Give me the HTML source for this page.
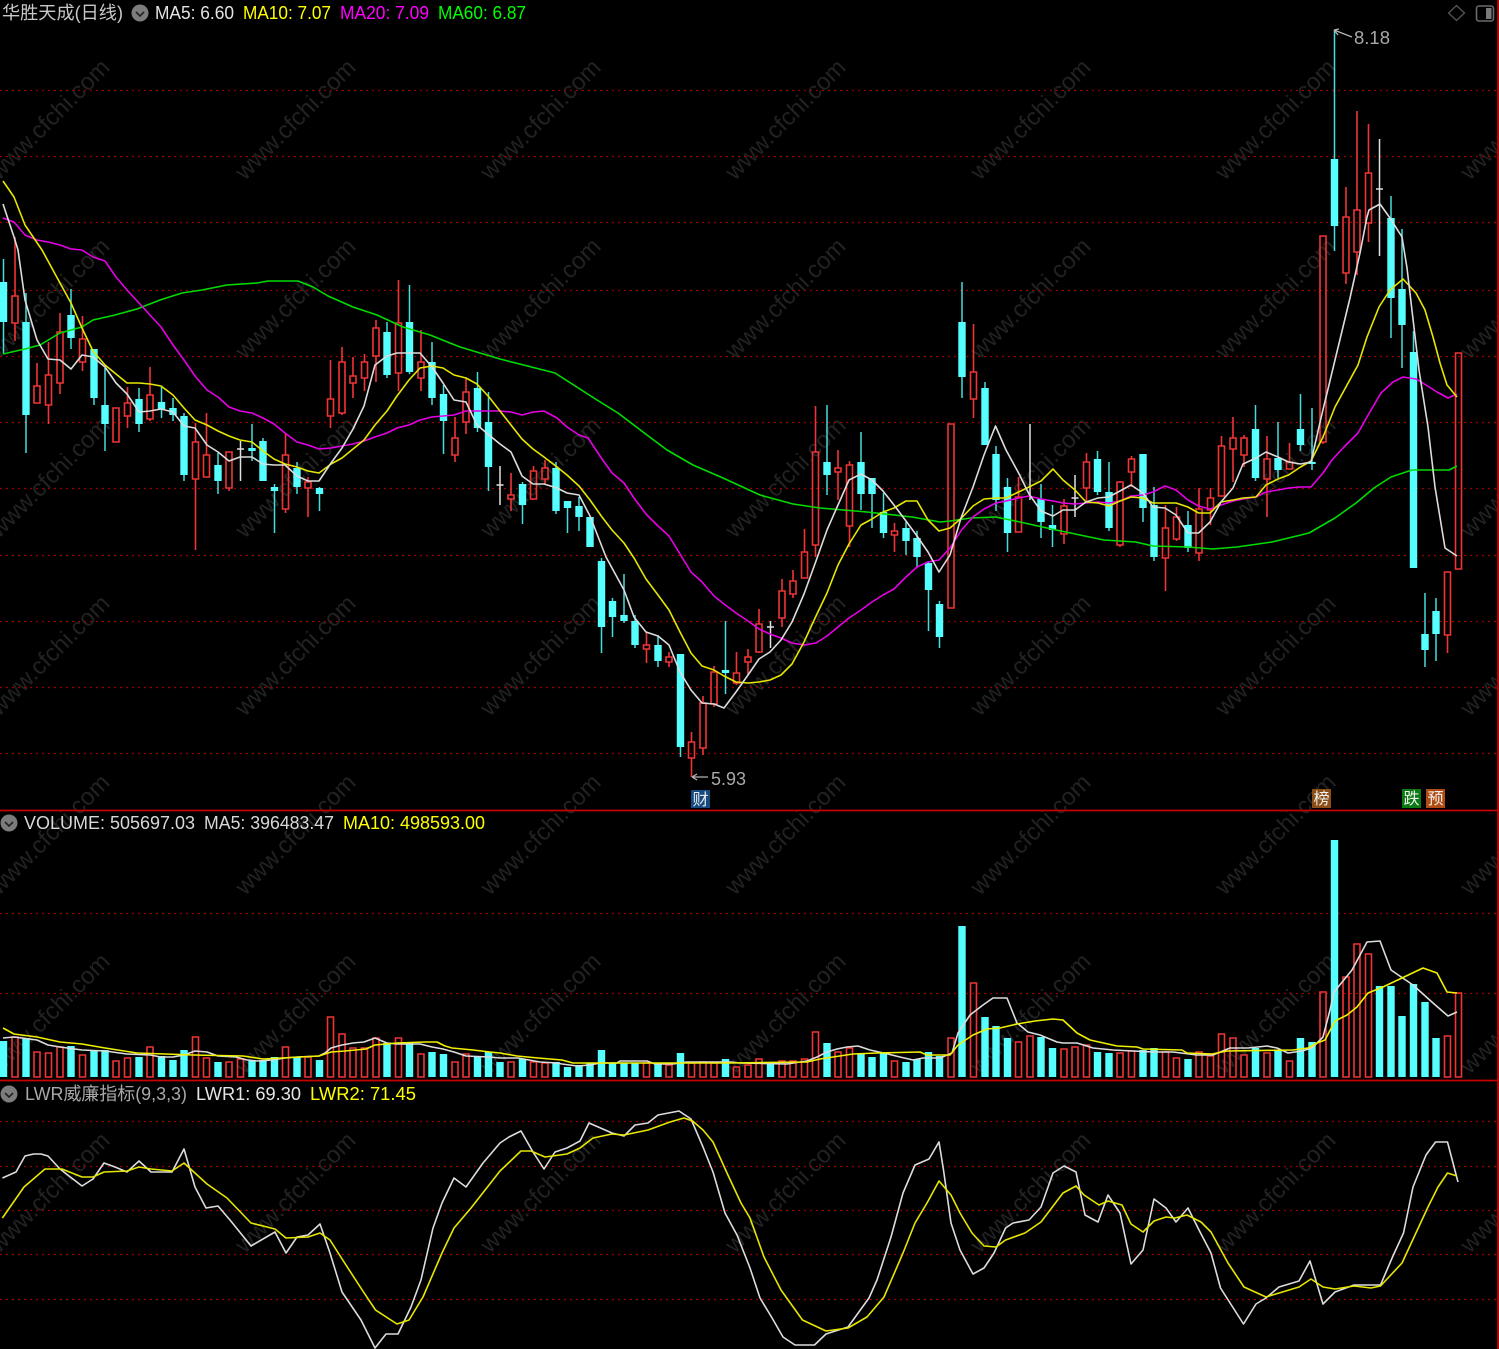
<!DOCTYPE html>
<html lang="zh">
<head>
<meta charset="utf-8">
<title>华胜天成(日线)</title>
<style>
html,body{margin:0;padding:0;background:#000;width:1499px;height:1349px;overflow:hidden}
svg{display:block;position:absolute;left:0;top:0;filter:blur(.3px)}
text{font-family:"Liberation Sans","Noto Sans CJK SC",sans-serif}
.wm text{font-size:24px;fill:#222}
.l{fill:none;stroke-width:1.6;stroke-linejoin:round}
</style>
</head>
<body>
<svg width="1499" height="1349" viewBox="0 0 1499 1349" xmlns="http://www.w3.org/2000/svg">
<rect width="1499" height="1349" fill="#000"/>
<!-- watermarks -->
<g class="wm" text-anchor="middle" transform="translate(5,0)">
<text transform="translate(50,125) rotate(-45)">www.cfchi.com</text><text transform="translate(296,125) rotate(-45)">www.cfchi.com</text><text transform="translate(541,125) rotate(-45)">www.cfchi.com</text><text transform="translate(786,125) rotate(-45)">www.cfchi.com</text><text transform="translate(1031,125) rotate(-45)">www.cfchi.com</text><text transform="translate(1276,125) rotate(-45)">www.cfchi.com</text><text transform="translate(1521,125) rotate(-45)">www.cfchi.com</text>
<text transform="translate(50,304) rotate(-45)">www.cfchi.com</text><text transform="translate(296,304) rotate(-45)">www.cfchi.com</text><text transform="translate(541,304) rotate(-45)">www.cfchi.com</text><text transform="translate(786,304) rotate(-45)">www.cfchi.com</text><text transform="translate(1031,304) rotate(-45)">www.cfchi.com</text><text transform="translate(1276,304) rotate(-45)">www.cfchi.com</text><text transform="translate(1521,304) rotate(-45)">www.cfchi.com</text>
<text transform="translate(50,483) rotate(-45)">www.cfchi.com</text><text transform="translate(296,483) rotate(-45)">www.cfchi.com</text><text transform="translate(541,483) rotate(-45)">www.cfchi.com</text><text transform="translate(786,483) rotate(-45)">www.cfchi.com</text><text transform="translate(1031,483) rotate(-45)">www.cfchi.com</text><text transform="translate(1276,483) rotate(-45)">www.cfchi.com</text><text transform="translate(1521,483) rotate(-45)">www.cfchi.com</text>
<text transform="translate(50,661) rotate(-45)">www.cfchi.com</text><text transform="translate(296,661) rotate(-45)">www.cfchi.com</text><text transform="translate(541,661) rotate(-45)">www.cfchi.com</text><text transform="translate(786,661) rotate(-45)">www.cfchi.com</text><text transform="translate(1031,661) rotate(-45)">www.cfchi.com</text><text transform="translate(1276,661) rotate(-45)">www.cfchi.com</text><text transform="translate(1521,661) rotate(-45)">www.cfchi.com</text>
<text transform="translate(50,840) rotate(-45)">www.cfchi.com</text><text transform="translate(296,840) rotate(-45)">www.cfchi.com</text><text transform="translate(541,840) rotate(-45)">www.cfchi.com</text><text transform="translate(786,840) rotate(-45)">www.cfchi.com</text><text transform="translate(1031,840) rotate(-45)">www.cfchi.com</text><text transform="translate(1276,840) rotate(-45)">www.cfchi.com</text><text transform="translate(1521,840) rotate(-45)">www.cfchi.com</text>
<text transform="translate(50,1019) rotate(-45)">www.cfchi.com</text><text transform="translate(296,1019) rotate(-45)">www.cfchi.com</text><text transform="translate(541,1019) rotate(-45)">www.cfchi.com</text><text transform="translate(786,1019) rotate(-45)">www.cfchi.com</text><text transform="translate(1031,1019) rotate(-45)">www.cfchi.com</text><text transform="translate(1276,1019) rotate(-45)">www.cfchi.com</text><text transform="translate(1521,1019) rotate(-45)">www.cfchi.com</text>
<text transform="translate(50,1198) rotate(-45)">www.cfchi.com</text><text transform="translate(296,1198) rotate(-45)">www.cfchi.com</text><text transform="translate(541,1198) rotate(-45)">www.cfchi.com</text><text transform="translate(786,1198) rotate(-45)">www.cfchi.com</text><text transform="translate(1031,1198) rotate(-45)">www.cfchi.com</text><text transform="translate(1276,1198) rotate(-45)">www.cfchi.com</text><text transform="translate(1521,1198) rotate(-45)">www.cfchi.com</text>
</g>
<!-- grid -->
<path fill="none" stroke="#960000" stroke-width="1.3" stroke-dasharray="2 4" d="M0 90.5H1496M0 156.5H1496M0 222.5H1496M0 290.5H1496M0 356.5H1496M0 422.5H1496M0 488.5H1496M0 555.5H1496M0 621.5H1496M0 687.5H1496M0 753.5H1496M0 913.5H1496M0 993.5H1496M0 1121.5H1496M0 1166.5H1496M0 1210.5H1496M0 1254.5H1496M0 1299.5H1496"/>
<path fill="none" stroke="#c80000" stroke-width="1.8" d="M0 810.5H1498M0 1080.5H1498"/>
<path fill="none" stroke="#c80000" stroke-width="1.8" d="M1498 0V1349"/>

<!-- cyan wicks -->
<path fill="none" stroke="#44dede" stroke-width="1.5" d="M3.5 259V354M26 293V453M71 289V349M94 349V405M105 368V451M139 388V432M161.5 387V418M173 398V421M184 413V481M218 453V494M252 424V461M263 438V481M274.5 484V533M297 462V494M319.5 487V511M387 322V378M409.5 285V374M432 342V405M443.5 385V454M477.5 372V432M488.5 392V491M522.5 482V524M556 462V514M567.5 501V533M579 497V531M590 517V547M601.5 558V653M612.5 598V637M624 574V623M635 615V648M658 635V667M680.5 654V757M725.5 621V694M827 405V495M861 432V510M872 478V528M883.5 493V538M906 522V555M917 531V568M928.5 561V631M939.5 601V648M962 282V398M985 382V445M996 446V511M1007.5 478V552M1041 484V538M1052.5 505V547M1097.5 451V495M1109 462V531M1143 454V522M1154 487V561M1188 511V552M1255.5 405V481M1278 422V478M1300.5 394V451M1312 408V470M1334.5 30V251M1391 196V338M1402 229V368M1413.5 331V568M1425 593V667M1436 598V661"/>
<!-- cyan bodies -->
<path fill="none" stroke="#55ffff" stroke-width="7.4" d="M3.5 282V322M26 322V415M71 315V338M94 349V398M105 405V424M139 399V424M161.5 402V409M173 408V415M184 416V475M218 465V481M252 448V451M263 441V481M274.5 487V491M297 468V487M319.5 488V494M387 332V375M409.5 322V372M432 362V398M443.5 394V421M477.5 388V428M488.5 422V467M522.5 484V505M556 468V511M567.5 501V508M579 506V517M590 517V547M601.5 561V627M612.5 601V617M624 615V621M635 621V645M658 645V661M680.5 654V747M725.5 670V673M827 462V475M861 462V494M872 478V494M883.5 512V533M906 528V541M917 538V557M928.5 563V590M939.5 604V637M962 322V377M985 388V445M996 454V500M1007.5 487V533M1041 499V522M1052.5 525V530M1097.5 459V492M1109 492V528M1143 454V508M1154 505V557M1188 525V548M1255.5 429V478M1278 458V470M1300.5 429V445M1312 462V464M1334.5 159V226M1391 218V298M1402 289V325M1413.5 352V568M1425 634V650M1436 611V634"/>
<!-- red candles -->
<path fill="none" stroke="#f03434" stroke-width="1.6" d="
M15 237V296M15 323V341M12 296h6V323h-6z
M37 363V386M34 386h6V403h-6z
M48.5 342V375M48.5 405V424M45.5 375h6V405h-6z
M60 313V332M60 383V394M57 332h6V383h-6z
M82.5 316V339M82.5 362V371M79.5 339h6V362h-6z
M113 408h6V442h-6z
M127.5 387V403M127.5 416V428M124.5 403h6V416h-6z
M150 367V395M150 419V421M147 395h6V419h-6z
M195.5 423V442M195.5 479V550M192.5 442h6V479h-6z
M206.5 413V455M203.5 455h6V477h-6z
M229 488V491M226 452h6V488h-6z
M285.5 433V455M285.5 509V513M282.5 455h6V509h-6z
M308 477V482M308 488V517M305 482h6V488h-6z
M330.5 360V399M330.5 416V428M327.5 399h6V416h-6z
M342 347V362M342 413V415M339 362h6V413h-6z
M353 357V376M353 383V398M350 376h6V383h-6z
M364.5 354V362M364.5 378V391M361.5 362h6V378h-6z
M376 320V328M376 356V382M373 328h6V356h-6z
M398.5 280V323M398.5 373V391M395.5 323h6V373h-6z
M421 330V362M421 378V391M418 362h6V378h-6z
M455 417V438M455 455V462M452 438h6V455h-6z
M466 378V392M466 422V434M463 392h6V422h-6z
M511 473V495M511 499V511M508 495h6V499h-6z
M533.5 466V471M533.5 499V500M530.5 471h6V499h-6z
M545 460V468M545 479V484M542 468h6V479h-6z
M646.5 632V645M646.5 649V663M643.5 645h6V649h-6z
M669 652V657M669 662V667M666 657h6V662h-6z
M691.5 732V742M691.5 758V777M688.5 742h6V758h-6z
M703 696V703M703 748V755M700 703h6V748h-6z
M714 666V672M714 704V707M711 672h6V704h-6z
M736.5 652V673M736.5 683V685M733.5 673h6V683h-6z
M748 649V657M748 662V675M745 657h6V662h-6z
M759 609V624M759 652V653M756 624h6V652h-6z
M782 579V591M782 618V627M779 591h6V618h-6z
M793 570V581M793 594V598M790 581h6V594h-6z
M804.5 529V552M801.5 552h6V578h-6z
M815.5 406V452M815.5 545V557M812.5 452h6V545h-6z
M838 450V468M838 472V500M835 468h6V472h-6z
M849.5 461V465M849.5 526V547M846.5 465h6V526h-6z
M894.5 523V531M894.5 535V552M891.5 531h6V535h-6z
M948 424h6V608h-6z
M973.5 324V372M973.5 399V418M970.5 372h6V399h-6z
M1018.5 477V497M1015.5 497h6V532h-6z
M1064 499V506M1064 534V544M1061 506h6V534h-6z
M1086.5 453V462M1086.5 488V502M1083.5 462h6V488h-6z
M1120 481V482M1120 545V547M1117 482h6V545h-6z
M1131.5 456V459M1131.5 472V487M1128.5 459h6V472h-6z
M1165.5 505V528M1165.5 558V591M1162.5 528h6V558h-6z
M1176.5 507V517M1176.5 539V541M1173.5 517h6V539h-6z
M1199 488V509M1199 553V561M1196 509h6V553h-6z
M1210.5 488V498M1210.5 510V525M1207.5 498h6V510h-6z
M1221.5 436V446M1218.5 446h6V496h-6z
M1233 417V438M1233 449V482M1230 438h6V449h-6z
M1244 435V438M1244 455V467M1241 438h6V455h-6z
M1267 436V459M1267 479V517M1264 459h6V479h-6z
M1289.5 443V462M1286.5 462h6V469h-6z
M1323 442V444M1320 236h6V442h-6z
M1346 187V217M1346 273V284M1343 217h6V273h-6z
M1357 111V210M1357 252V275M1354 210h6V252h-6z
M1368.5 124V173M1368.5 223V242M1365.5 173h6V223h-6z
M1447.5 635V653M1444.5 572h6V635h-6z
M1455.5 353h6V569h-6z"/>
<!-- white doji -->
<path fill="none" stroke="#e0e0e0" stroke-width="1.5" d="M240.5 441V481M237 449h7M500 466V505M496.5 485h7M770.5 621V648M767 627h7M1030 424V500M1075 475V517M1071.5 498h7M1379.5 139V256M1376 189h7"/>

<!-- MA60 -->
<polyline class="l" stroke="#00dc00" points="3,354 25,349 40,345 60,333 82,327 93,320 115,315 137,309 160,300 182,293 202,290 227,285 257,283 268,281 298,281 313,287 328,296 353,307 377,315 403,327 430,335 460,347 500,359 555,373 597,400 618,413 643,432 667,450 693,465 723,478 760,495 793,504 820,508 867,512 912,517 940,522 950,521 971,518 995.5,517 1020,522 1051.5,529 1080,535 1104,540 1135.6,542 1153,546 1188,547 1212.6,549 1237,547 1272,542 1309,533 1335,518 1356,503 1374,488 1391,477 1412,470 1449,470 1457,466"/>
<!-- MA20 -->
<polyline class="l" stroke="#e600e6" points="3,218 14,222 25,235 37,240 48,242 60,245 71,249 82,250 93,257 105,261 116,277 127,290 139,303 150,315 161,327 173,345 184,360 195,376 207,390 218,397 229,407 240,411 252,413 263,418 274,424 285,433 297,442 308,445 319,449 331,448 342,446 353,444 364,441 375,437 387,433 397,428 409,425 420,420 432,417 443,416 454,415 466,411 477,411 489,411 500,411 511,412 522,415 533,412 544,411 557,418 567,427 579,435 588,438 602,459 612,473 624,483 634,498 646,514 658,526 669,536 680,554 691,572 702,582 714,596 724,604 736,613 748,621 759,629 770,634 781,638 792,643 804,645 816,643 827,636 838,627 849,618 861,610 872,602 883,595 894,589 906,577 917,567 928,562 939,560 950,548 961.5,530 973,517 984,509 996,503 1006,501 1018.6,498 1029,496 1041,499 1053,501 1063,503 1075,504 1086,503 1098,502 1109,503 1120,501 1131,496 1143,495 1153,492 1165,486 1176,490 1188,500 1198.6,506 1210,509 1221,505 1233,501 1243,499 1256,497 1266,492 1278,490 1288.6,488 1300.5,487 1311,487 1323,473 1332,460 1344,447 1358,433 1367,417 1381,393 1393,382 1403,377 1416,379 1426,385 1437,392 1448,398 1457,394"/>
<!-- MA10 -->
<polyline class="l" stroke="#e6e600" points="3,181 14,197 25,225 42,250 60,283 71,303 82,328 93,351 105,365 116,374 127,383 139,383 150,384 161,386 173,395 184,408 195,420 207,425 218,431 229,436 240,440 252,442 263,451 274,459 285,464 297,467 308,471 319,473 331,464 342,458 353,449 364,440 375,425 387,411 397,396 409,380 420,368 432,366 443,368 454,375 466,378 477,384 489,397 500,411 511,425 522,439 533,449 544,457 557,467 567,475 579,486 590,500 602,517 612,530 624,543 634,558 646,579 658,595 669,610 680,632 691,653 702,666 714,670 724,676 736,682 748,683 759,682 770,680 781,675 792,664 804,642 816,616 827,593 838,565 849,544 861,525 872,519 883,512 894,508 906,501 917,501 928,520 939,531 950,528 961.5,518 973,506 984,499 996,498 1006,498 1018.6,492 1029,487 1041,481 1053,469 1063,480 1075,490 1086,502 1098,503 1109,506 1120,501 1131,497 1143,498 1153,503 1165,503 1176,503 1188,507 1198.6,513 1210,513 1221,502 1233,500 1243,498 1256,497 1266,485 1278,479 1288.6,475 1300.5,467 1311,461 1323,437 1335,407 1347,385 1358,365 1367,337 1379,307 1390,290 1403,279 1416,293 1425,310 1433,337 1440,363 1447,385 1457,397"/>
<!-- MA5 -->
<polyline class="l" stroke="#dcdcdc" points="3,204 14,237 18,250 25,300 37,340 48,359 60,360 71,369 82,355 93,357 105,367 116,383 127,394 139,412 150,411 161,409 173,412 184,426 195,428 207,445 218,452 229,461 240,457 252,457 263,464 274,465 285,465 297,476 308,481 319,481 331,463 342,448 353,429 364,406 375,365 387,356 397,353 409,353 420,353 432,367 443,383 454,400 466,402 477,425 489,435 500,444 511,452 522,476 533,484 544,484 557,488 567,493 579,495 590,516 606,557 624,590 634,617 646,632 658,636 669,645 680,672 691,690 702,703 714,704 724,708 736,692 748,675 759,659 770,652 781,640 792,622 804,594 816,561 827,530 838,505 849,480 861,474 872,480 883,491 894,505 906,521 917,536 928,552 939,572 950,555 961,518 973,487 984,455 995.5,426 1006,450 1018.6,473 1029,494 1041,511 1053,516 1063,510 1075,510 1086,502 1098,498 1108.6,497 1120,491 1131,485 1143,493 1153,507 1165,508 1176,515 1188,533 1198.6,533 1210,522 1221,502 1233,488 1243,464 1256,458 1266,452 1278,457 1288.6,462 1300.5,464 1311,462 1321,418 1335,360 1350,298 1360,253 1367,217 1369,210 1380,204 1390,218 1402,237 1407,268 1419,370 1428,427 1435,487 1445,548 1457,556"/>

<!-- price labels -->
<path fill="none" stroke="#b4b4b4" stroke-width="1.3" d="M1334 30L1352 37M1334 30l5 -1M1334 30l4 5M692 777H708M692 777l5 -3M692 777l5 3"/>
<text x="1354" y="44" font-size="18" fill="#a8a8a8" textLength="36" lengthAdjust="spacingAndGlyphs">8.18</text>
<text x="711" y="785" font-size="18" fill="#a8a8a8" textLength="35" lengthAdjust="spacingAndGlyphs">5.93</text>
<rect x="691" y="790" width="19" height="18" fill="#154a80"/>
<text x="700.5" y="805" font-size="16" fill="#e8e8e8" text-anchor="middle">财</text>
<rect x="1312" y="789" width="19" height="19" fill="#8a4e16"/>
<text x="1321.5" y="804" font-size="16" fill="#f0f0f0" text-anchor="middle">榜</text>
<rect x="1402" y="789" width="19" height="19" fill="#0a7a14"/>
<text x="1411.5" y="804" font-size="16" fill="#f0f0f0" text-anchor="middle">跌</text>
<rect x="1426" y="789" width="19" height="19" fill="#b04c12"/>
<text x="1435.5" y="804" font-size="16" fill="#f0f0f0" text-anchor="middle">预</text>

<!-- volume cyan bars -->
<path fill="none" stroke="#55ffff" stroke-width="7.4" d="M3.5 1041V1077M26 1038V1077M71 1046V1077M94 1050V1077M105 1050V1077M139 1057V1077M161.5 1056V1077M173 1060V1077M184 1050V1077M218 1062V1077M252 1061V1077M263 1061V1077M274.5 1057V1077M297 1057V1077M319.5 1060V1077M387 1043V1077M409.5 1043V1077M432 1052V1077M443.5 1054V1077M477.5 1057V1077M488.5 1052V1077M500 1062V1077M522.5 1059V1077M556 1062V1077M567.5 1067V1077M579 1065V1077M590 1063V1077M601.5 1050V1077M612.5 1063V1077M624 1063V1077M635 1063V1077M658 1063V1077M680.5 1053V1077M725.5 1059V1077M770.5 1063V1077M827 1043V1077M861 1054V1077M872 1057V1077M883.5 1053V1077M906 1062V1077M917 1059V1077M928.5 1052V1077M939.5 1056V1077M962 926V1077M985 1017V1077M996 1026V1077M1007.5 1038V1077M1041 1037V1077M1052.5 1048V1077M1097.5 1052V1077M1109 1053V1077M1143 1050V1077M1154 1048V1077M1188 1059V1077M1255.5 1048V1077M1278 1050V1077M1300.5 1038V1077M1312 1042V1077M1334.5 840V1077M1379.5 986V1077M1391 986V1077M1402 1016V1077M1413.5 984V1077M1425 1002V1077M1436 1038V1077"/>
<!-- volume red bars -->
<path fill="none" stroke="#f03434" stroke-width="1.6" d="M12 1037h6V1077h-6zM34 1052h6V1077h-6zM45.5 1053h6V1077h-6zM57 1047h6V1077h-6zM79.5 1055h6V1077h-6zM113 1061h6V1077h-6zM124.5 1058h6V1077h-6zM147 1047h6V1077h-6zM192.5 1037h6V1077h-6zM203.5 1058h6V1077h-6zM226 1062h6V1077h-6zM237.5 1059h6V1077h-6zM282.5 1047h6V1077h-6zM305 1057h6V1077h-6zM327.5 1017h6V1077h-6zM339 1034h6V1077h-6zM350 1048h6V1077h-6zM361.5 1048h6V1077h-6zM373 1038h6V1077h-6zM395.5 1038h6V1077h-6zM418 1054h6V1077h-6zM452 1062h6V1077h-6zM463 1054h6V1077h-6zM508 1062h6V1077h-6zM530.5 1062h6V1077h-6zM542 1063h6V1077h-6zM643.5 1063h6V1077h-6zM666 1065h6V1077h-6zM688.5 1063h6V1077h-6zM700 1062h6V1077h-6zM711 1063h6V1077h-6zM733.5 1067h6V1077h-6zM745 1065h6V1077h-6zM756 1059h6V1077h-6zM779 1061h6V1077h-6zM790 1061h6V1077h-6zM801.5 1059h6V1077h-6zM812.5 1032h6V1077h-6zM835 1052h6V1077h-6zM846.5 1048h6V1077h-6zM891.5 1061h6V1077h-6zM948 1038h6V1077h-6zM970.5 983h6V1077h-6zM1015.5 1042h6V1077h-6zM1027 1036h6V1077h-6zM1061 1049h6V1077h-6zM1072 1047h6V1077h-6zM1083.5 1045h6V1077h-6zM1117 1053h6V1077h-6zM1128.5 1051h6V1077h-6zM1162.5 1052h6V1077h-6zM1173.5 1058h6V1077h-6zM1196 1052h6V1077h-6zM1207.5 1056h6V1077h-6zM1218.5 1034h6V1077h-6zM1230 1038h6V1077h-6zM1241 1055h6V1077h-6zM1264 1053h6V1077h-6zM1286.5 1061h6V1077h-6zM1320 992h6V1077h-6zM1343 977h6V1077h-6zM1354 944h6V1077h-6zM1365.5 954h6V1077h-6zM1444.5 1036h6V1077h-6zM1455.5 993h6V1077h-6z"/>
<!-- volume MA5 -->
<polyline class="l" stroke="#dcdcdc" points="3,1038 14,1037 37,1040 48,1045 60,1047 82,1050 105,1051 127,1054 150,1055 161,1057 173,1057 184,1055 195,1051 207,1052 218,1056 236,1057 247,1060 257,1061 272,1060 285,1058 297,1057 319,1056 325,1053 331,1048 342,1045 353,1043 364,1042 375,1038 387,1043 397,1044 409,1044 420,1044 432,1047 443,1049 454,1052 466,1056 489,1057 500,1058 518,1058 540,1062 557,1063 562,1064 577,1066 590,1065 600,1063 617,1063 620,1061 647,1061 655,1064 673,1064 687,1062 707,1062 713,1062 730,1062 740,1063 787,1064 807,1061 817,1057 827,1052 837,1049 847,1047 858,1046 870,1050 888,1054 900,1057 913,1060 923,1058 940,1058 952,1053 958,1033 970,1015 983,1005 993,998 1007,998 1017,1023 1028,1032 1040,1035 1057,1042 1063,1043 1077,1043 1093,1048 1113,1050 1133,1051 1153,1052 1173,1052 1197,1055 1213,1055 1230,1048 1248,1048 1267,1046 1277,1048 1288,1053 1302,1051 1312,1048 1323,1037 1330,1010 1334,992 1352,970 1367,942 1380,941 1391,970 1413,985 1433,1003 1448,1016 1457,1012"/>
<!-- volume MA10 -->
<polyline class="l" stroke="#f0f000" points="3,1028 14,1034 37,1037 60,1042 82,1044 105,1048 137,1053 193,1055 243,1056 263,1059 319,1056 331,1052 345,1051 366,1049 375,1045 397,1043 425,1042 437,1042 445,1046 452,1048 473,1050 490,1052 500,1053 517,1056 538,1058 562,1060 573,1063 603,1063 647,1063 687,1063 730,1063 807,1062 820,1059 833,1057 853,1054 877,1053 920,1052 927,1055 950,1055 958,1045 973,1035 987,1029 1000,1028 1017,1024 1035,1021 1053,1019 1063,1020 1077,1033 1090,1040 1117,1046 1137,1047 1143,1049 1182,1050 1187,1053 1212,1054 1227,1051 1293,1050 1308,1048 1317,1043 1325,1040 1335,1021 1347,1015 1357,1007 1368,993 1383,987 1402,978 1423,968 1437,973 1447,992 1457,993"/>

<!-- LWR1 -->
<polyline class="l" stroke="#dcdcdc" points="2.4,1178 16,1172 25,1156 33.5,1154 41,1154 48,1156 60,1169 82,1186 93,1179 104,1163 115,1167 127,1172 139,1161 151,1172 172,1172 184,1149 195,1187 206,1208 218,1206 230,1220 251,1246 275,1232 286,1253 297,1237 308,1235 320,1224 330,1253 342,1292 361,1320 375,1348 386,1334 398,1334 411,1307 421,1280 433,1228 442,1203 454,1178 466,1187 483,1163 500,1143 509,1137 521,1131 533,1152 544,1169 555,1152 567,1148 580,1141 589,1123 612,1133 624,1136 635,1125 648,1123 658,1115 679,1111 691,1119 703,1147 713,1172 725,1213 737,1235 750,1268 760,1298 771.5,1317 783,1337 795,1345 814.5,1345 826,1334 848,1327 869,1298 877,1280 891,1237 903,1193 915,1165 929,1159 939,1142 943.5,1170 951,1223 960,1250 973,1274 984,1268 994,1253 1005.6,1228 1013,1223 1029,1220 1041,1207 1053,1173 1064,1166 1076,1172 1085,1215 1098,1222 1108,1195 1120,1213 1131,1264 1143,1250 1154,1199 1166,1208 1176,1222 1188,1208 1199,1230 1211,1253 1220.5,1288 1243.5,1324 1256,1304 1266,1298 1279,1287 1299,1281 1310,1261 1323,1304 1335,1292 1354,1285 1380.5,1285 1392.5,1257 1403.5,1233 1413,1187 1426,1155 1435.5,1142 1447.5,1142 1458,1182"/>
<!-- LWR2 -->
<polyline class="l" stroke="#e6e600" points="2.4,1218 24,1187 45,1169 62,1169 82,1177 93,1177 104,1172 127,1171 139,1167 151,1169 172,1171 184,1163 207,1184 227,1198 251,1223 275,1229 286,1238 308,1237 320,1233 330,1240 344,1262 363.5,1292 375.5,1310 397,1324 409,1320 423,1297 442,1253 454,1228 471,1208 500,1171 521,1151 531,1151 545,1157 567,1154 580,1148 593,1138 612,1134 624,1135 648,1130 670,1122 684,1118 692.6,1121 703,1130 713,1142 727,1173 741,1203 750,1218 764,1257 781,1290 802.5,1320 826,1331 848,1328 867,1317 884,1297 903,1253 915,1223 927,1203 939,1181 951,1195 960,1213 972,1233 984,1246 996,1247 1005.6,1240 1025,1233 1041,1222 1063,1193 1076,1186 1084,1195 1099,1205 1108,1201 1122,1205 1131,1224 1143,1232 1154,1221 1166,1217 1175,1218 1187,1215 1201,1222 1211,1232 1228,1263 1244,1287 1266,1297 1299,1287 1311,1279 1323,1287 1335,1289 1354,1286 1371,1288 1380.5,1286 1402,1263 1428,1207 1438,1187 1447.5,1173 1457,1176"/>

<!-- headers -->
<text x="2" y="19" font-size="18" fill="#c8c8c8" textLength="121" lengthAdjust="spacingAndGlyphs">华胜天成(日线)</text>
<circle cx="140" cy="13" r="8.5" fill="#7c7c7c"/>
<path d="M136 12l4 4 4-4" fill="none" stroke="#222" stroke-width="1.6"/>
<text x="155" y="19" font-size="18" fill="#e4e4e4" textLength="79" lengthAdjust="spacingAndGlyphs">MA5: 6.60</text>
<text x="243" y="19" font-size="18" fill="#ffff00" textLength="88" lengthAdjust="spacingAndGlyphs">MA10: 7.07</text>
<text x="340" y="19" font-size="18" fill="#ff00ff" textLength="89" lengthAdjust="spacingAndGlyphs">MA20: 7.09</text>
<text x="438" y="19" font-size="18" fill="#00ff00" textLength="88" lengthAdjust="spacingAndGlyphs">MA60: 6.87</text>
<path d="M1456.5 5.5l8 7.5-8 7.5-8-7.5z" fill="none" stroke="#555" stroke-width="1.3"/>
<rect x="1476.5" y="6" width="17" height="15" rx="2.5" fill="none" stroke="#6a6a6a" stroke-width="1.6"/>
<rect x="1486" y="8" width="5.5" height="11" fill="#7a7a7a"/>

<circle cx="9" cy="823" r="8.5" fill="#7c7c7c"/>
<path d="M5 822l4 4 4-4" fill="none" stroke="#222" stroke-width="1.6"/>
<text x="24" y="829" font-size="18" fill="#d8d8d8" textLength="171" lengthAdjust="spacingAndGlyphs">VOLUME: 505697.03</text>
<text x="204" y="829" font-size="18" fill="#d8d8d8" textLength="130" lengthAdjust="spacingAndGlyphs">MA5: 396483.47</text>
<text x="343" y="829" font-size="18" fill="#ffff00" textLength="142" lengthAdjust="spacingAndGlyphs">MA10: 498593.00</text>

<circle cx="9" cy="1094" r="8.5" fill="#7c7c7c"/>
<path d="M5 1093l4 4 4-4" fill="none" stroke="#222" stroke-width="1.6"/>
<text x="25" y="1100" font-size="18" fill="#a8a8a8" textLength="162" lengthAdjust="spacingAndGlyphs">LWR威廉指标(9,3,3)</text>
<text x="196" y="1100" font-size="18" fill="#e4e4e4" textLength="105" lengthAdjust="spacingAndGlyphs">LWR1: 69.30</text>
<text x="310" y="1100" font-size="18" fill="#ffff00" textLength="106" lengthAdjust="spacingAndGlyphs">LWR2: 71.45</text>
</svg>
</body>
</html>
